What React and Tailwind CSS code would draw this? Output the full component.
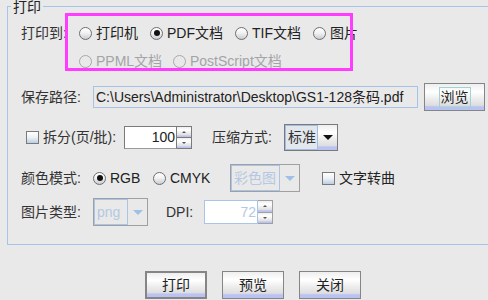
import React from "react";

const btnBg =
  "bg-[linear-gradient(to_bottom,#eeeeee_0%,#ffffff_30%,#ebebeb_60%,#dedede_82%,#b9c2f2_88%,#b9c2f2_100%)]";

function Radio({ checked, disabled }) {
  if (disabled) {
    return <span className="h-[13px] w-[13px] shrink-0 rounded-full border border-[#a8a8a8] bg-[#e9e9e9]" />;
  }
  return (
    <span className="flex h-[13px] w-[13px] shrink-0 items-center justify-center rounded-full border border-[#6e6e6e] bg-[linear-gradient(to_bottom,#ffffff_0%,#f2f2f2_45%,#c9ccd4_100%)]">
      {checked && <span className="h-[6px] w-[6px] rounded-full bg-[#111]" />}
    </span>
  );
}

function Check() {
  return (
    <span className="h-[13px] w-[13px] shrink-0 border border-[#7a7a7a] bg-[linear-gradient(to_bottom,#ffffff_0%,#eef0f4_50%,#b8cfe5_100%)]" />
  );
}

function Option({ label, checked, disabled, width }) {
  return (
    <div className={["flex items-center gap-[4px]", width].join(" ")}>
      <Radio checked={checked} disabled={disabled} />
      <span className={disabled ? "text-[#a4a4a8]" : "text-[#222]"}>{label}</span>
    </div>
  );
}

function Arrow({ color }) {
  return <span className={["h-0 w-0 border-x-[5px] border-t-[5px] border-x-transparent", color].join(" ")} />;
}

function Combo({ value, disabled, width }) {
  return (
    <div
      className={[
        "flex h-full border",
        width,
        disabled ? "border-[#a0a0a0]" : "border-[#7a7a7a]",
      ].join(" ")}
    >
      <div
        className={[
          "flex flex-1 items-center border pl-[2px]",
          disabled ? "border-[#a9c4e6] text-[#b4c8e2]" : "border-[#a3bde0] bg-[#e2e7ee] text-[#333]",
        ].join(" ")}
      >
        {value}
      </div>
      <div
        className={[
          "flex w-[19px] items-center justify-center",
          disabled ? "" : btnBg,
        ].join(" ")}
      >
        <Arrow color={disabled ? "border-t-[#9fbfe6]" : "border-t-[#111]"} />
      </div>
    </div>
  );
}

function Spinner({ value, disabled, width, height }) {
  const line = disabled ? "border-[#a0a0a0]" : "border-[#7a7a7a]";
  return (
    <div className={["flex", height].join(" ")}>
      <div
        className={[
          "flex items-center justify-end border bg-white pr-[1px]",
          width,
          disabled ? "border-[#a9c4e6] text-[#b4c8e2]" : "border-[#7a7a7a] border-b-[#9a9a9a] text-[#222]",
        ].join(" ")}
      >
        {value}
      </div>
      <div className={["flex w-[15px] flex-col border border-l-0", line].join(" ")}>
        <div className={["flex flex-1 items-center justify-center border-b", line, btnBg].join(" ")}>
          <span className="h-0 w-0 border-x-[2px] border-b-[2px] border-x-transparent border-b-[#555]" />
        </div>
        <div className={["flex flex-1 items-center justify-center", btnBg].join(" ")}>
          <span className="h-0 w-0 border-x-[2px] border-t-[2px] border-x-transparent border-t-[#555]" />
        </div>
      </div>
    </div>
  );
}

function Button({ label, primary, focus, width }) {
  return (
    <div
      className={[
        "flex h-[28px] items-center justify-center text-[#222]",
        width,
        primary ? "border-2 border-[#858585]" : "border border-[#858585]",
        btnBg,
      ].join(" ")}
    >
      <span className={focus ? "border border-[#9fd3d3] px-[1px] leading-[19px]" : ""}>{label}</span>
    </div>
  );
}

export default function App() {
  return (
    <div className="relative h-[300px] w-[488px] overflow-hidden bg-[#e9e9e9] font-['Liberation_Sans','Noto_Sans_CJK_SC',sans-serif] text-[14px] leading-[16px] text-[#333]">
      <div className="relative ml-[7px] mt-[6px] box-border h-[239px] w-[500px] border-y border-l border-[#a6c4ea] pt-[12px]">
        <span className="absolute -top-[7px] left-[3px] bg-[#e9e9e9] px-[2px] leading-[15px] text-[#222]">打印</span>

        <div className="flex h-[28px] items-center pl-[13px]">
          <span className="w-[58px]">打印到:</span>
          <Option label="打印机" width="w-[71px]" />
          <Option label="PDF文档" checked width="w-[85px]" />
          <Option label="TIF文档" width="w-[78px]" />
          <Option label="图片" />
        </div>
        <div className="flex h-[28px] items-center pl-[71px]">
          <Option label="PPML文档" disabled width="w-[94px]" />
          <Option label="PostScript文档" disabled />
        </div>

        <div className="mt-[8px] flex h-[28px] items-center pl-[13px]">
          <span className="w-[72px]">保存路径:</span>
          <div className="flex h-[22px] w-[325px] items-center border border-[#a6c2e4] pl-[2px] text-[#222]">
            C:\Users\Administrator\Desktop\GS1-128条码.pdf
          </div>
          <div className="ml-[6px]">
            <Button label="浏览" focus width="w-[61px]" />
          </div>
        </div>

        <div className="mt-[12px] flex h-[28px] items-center pl-[18px]">
          <Check />
          <span className="ml-[4px] w-[81px]">拆分(页/批):</span>
          <Spinner value="100" width="w-[53px]" height="h-[23px]" />
          <span className="ml-[20px] w-[72px]">压缩方式:</span>
          <div className="h-[27px]">
            <Combo value="标准" width="w-[54px]" />
          </div>
        </div>

        <div className="mt-[13px] flex h-[28px] items-center pl-[13px]">
          <span className="w-[72px]">颜色模式:</span>
          <Option label="RGB" checked width="w-[60px]" />
          <Option label="CMYK" width="w-[77px]" />
          <div className="h-[28px]">
            <Combo value="彩色图" disabled width="w-[70px]" />
          </div>
          <div className="ml-[22px] flex items-center gap-[4px] text-[#222]">
            <Check />
            <span>文字转曲</span>
          </div>
        </div>

        <div className="mt-[6px] flex h-[28px] items-center pl-[13px]">
          <span className="w-[72px]">图片类型:</span>
          <div className="h-[28px]">
            <Combo value="png" disabled width="w-[55px]" />
          </div>
          <span className="ml-[18px] w-[38px]">DPI:</span>
          <Spinner value="72" disabled width="w-[54px]" height="h-[24px]" />
        </div>
      </div>

      <div className="mt-[26px] flex gap-[15px] pl-[145px]">
        <Button label="打印" primary width="w-[62px]" />
        <Button label="预览" width="w-[62px]" />
        <Button label="关闭" width="w-[62px]" />
      </div>

      <div className="pointer-events-none absolute left-[65px] top-[13px] h-[58px] w-[288px] border-[3px] border-[#ff3cff]" />
    </div>
  );
}
